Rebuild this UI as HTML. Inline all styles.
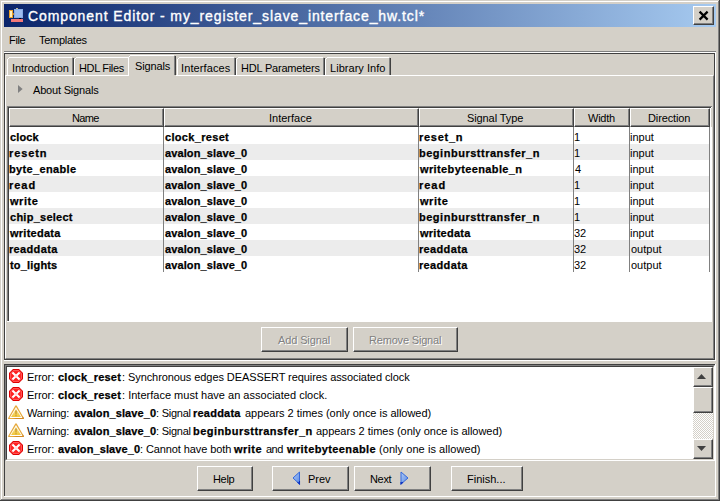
<!DOCTYPE html>
<html><head><meta charset="utf-8">
<style>
*{margin:0;padding:0;box-sizing:border-box}html,body{width:720px;height:501px;overflow:hidden;background:#D4D0C8}body{position:relative;font-family:"Liberation Sans",sans-serif;font-size:11px;color:#000}.a{position:absolute}.t{position:absolute;white-space:pre;line-height:13px}.b{font-weight:bold}.btn{position:absolute;background:#D4D0C8;border-top:1px solid #fff;border-left:1px solid #fff;border-right:1px solid #404040;border-bottom:1px solid #404040}.btn:after{content:"";position:absolute;left:0;top:0;right:0;bottom:0;border-right:1px solid #808080;border-bottom:1px solid #808080}
</style></head><body>
<div class="a" style="left:1px;top:1px;width:718px;height:1px;background:#fff"></div>
<div class="a" style="left:1px;top:1px;width:1px;height:498px;background:#fff"></div>
<div class="a" style="left:719px;top:0;width:1px;height:501px;background:#404040"></div>
<div class="a" style="left:718px;top:1px;width:1px;height:499px;background:#808080"></div>
<div class="a" style="left:0;top:500px;width:720px;height:1px;background:#404040"></div>
<div class="a" style="left:1px;top:499px;width:718px;height:1px;background:#808080"></div>
<div class="a" style="left:4px;top:4px;width:712px;height:23px;background:linear-gradient(to right,#0A246A,#A6CAF0)"></div>
<svg class="a" style="left:9px;top:8px" width="16" height="16" viewBox="0 0 16 16"><rect x="0" y="2" width="4" height="8" fill="#E9A02A"/><rect x="1" y="3" width="2" height="6" fill="#FFF0C0"/><rect x="4" y="5" width="1" height="2" fill="#C08030"/><rect x="7" y="0" width="2" height="1" fill="#C0B890"/><rect x="5" y="1" width="9" height="9" fill="#86ACE6"/><rect x="6" y="2" width="7" height="7" fill="#9DBDF0"/><rect x="10" y="10" width="2" height="1" fill="#000"/><rect x="2" y="11" width="12" height="3" fill="#F27878"/></svg>
<div class="btn" style="left:693px;top:6px;width:21px;height:19px"></div>
<svg class="a" style="left:698px;top:10px" width="12" height="12" viewBox="0 0 12 12"><path d="M1.6 1.6 L9.6 9.6 M9.6 1.6 L1.6 9.6" stroke="#000" stroke-width="2.2"/></svg>
<div class="a" style="left:4px;top:51px;width:712px;height:1px;background:#808080"></div>
<div class="a" style="left:4px;top:52px;width:712px;height:309px;border-top:1px solid #fff;border-right:1px solid #fff;border-bottom:1px solid #fff"></div>
<div class="a" style="left:4px;top:53px;width:711px;height:307px;border:1px solid #404040"></div>
<div class="a" style="left:7px;top:57px;width:67px;height:18px;background:#D4D0C8"></div>
<div class="a" style="left:9px;top:57px;width:63px;height:1px;background:#fff"></div>
<div class="a" style="left:8px;top:58px;width:1px;height:1px;background:#fff"></div>
<div class="a" style="left:7px;top:59px;width:1px;height:16px;background:#fff"></div>
<div class="a" style="left:72px;top:58px;width:1px;height:17px;background:#808080"></div>
<div class="a" style="left:73px;top:58px;width:1px;height:17px;background:#404040"></div>
<div class="a" style="left:74px;top:57px;width:56px;height:18px;background:#D4D0C8"></div>
<div class="a" style="left:76px;top:57px;width:52px;height:1px;background:#fff"></div>
<div class="a" style="left:75px;top:58px;width:1px;height:1px;background:#fff"></div>
<div class="a" style="left:74px;top:59px;width:1px;height:16px;background:#fff"></div>
<div class="a" style="left:128px;top:58px;width:1px;height:17px;background:#808080"></div>
<div class="a" style="left:129px;top:58px;width:1px;height:17px;background:#404040"></div>
<div class="a" style="left:177px;top:57px;width:59px;height:18px;background:#D4D0C8"></div>
<div class="a" style="left:179px;top:57px;width:55px;height:1px;background:#fff"></div>
<div class="a" style="left:178px;top:58px;width:1px;height:1px;background:#fff"></div>
<div class="a" style="left:177px;top:59px;width:1px;height:16px;background:#fff"></div>
<div class="a" style="left:234px;top:58px;width:1px;height:17px;background:#808080"></div>
<div class="a" style="left:235px;top:58px;width:1px;height:17px;background:#404040"></div>
<div class="a" style="left:236px;top:57px;width:89px;height:18px;background:#D4D0C8"></div>
<div class="a" style="left:238px;top:57px;width:85px;height:1px;background:#fff"></div>
<div class="a" style="left:237px;top:58px;width:1px;height:1px;background:#fff"></div>
<div class="a" style="left:236px;top:59px;width:1px;height:16px;background:#fff"></div>
<div class="a" style="left:323px;top:58px;width:1px;height:17px;background:#808080"></div>
<div class="a" style="left:324px;top:58px;width:1px;height:17px;background:#404040"></div>
<div class="a" style="left:325px;top:57px;width:66px;height:18px;background:#D4D0C8"></div>
<div class="a" style="left:327px;top:57px;width:62px;height:1px;background:#fff"></div>
<div class="a" style="left:326px;top:58px;width:1px;height:1px;background:#fff"></div>
<div class="a" style="left:325px;top:59px;width:1px;height:16px;background:#fff"></div>
<div class="a" style="left:389px;top:58px;width:1px;height:17px;background:#808080"></div>
<div class="a" style="left:390px;top:58px;width:1px;height:17px;background:#404040"></div>
<div class="a" style="left:5px;top:75px;width:709px;height:284px;border-top:1px solid #fff;border-left:1px solid #fff;border-right:1px solid #808080;border-bottom:1px solid #808080"></div>
<div class="a" style="left:128px;top:55px;width:48px;height:21px;background:#D4D0C8"></div>
<div class="a" style="left:130px;top:55px;width:44px;height:1px;background:#fff"></div>
<div class="a" style="left:129px;top:56px;width:1px;height:1px;background:#fff"></div>
<div class="a" style="left:128px;top:57px;width:1px;height:19px;background:#fff"></div>
<div class="a" style="left:174px;top:56px;width:1px;height:19px;background:#808080"></div>
<div class="a" style="left:175px;top:56px;width:1px;height:19px;background:#404040"></div>
<svg class="a" style="left:18px;top:85px" width="5" height="8" viewBox="0 0 5 8"><path d="M0 0 L4.6 4 L0 8 Z" fill="#808080"/></svg>
<div class="a" style="left:7px;top:106px;width:705px;height:216px;background:#fff"></div>
<div class="a" style="left:7px;top:106px;width:705px;height:1px;background:#808080"></div>
<div class="a" style="left:7px;top:106px;width:1px;height:215px;background:#808080"></div>
<div class="a" style="left:8px;top:107px;width:703px;height:1px;background:#404040"></div>
<div class="a" style="left:8px;top:107px;width:1px;height:214px;background:#404040"></div>
<div class="a" style="left:9px;top:108px;width:155px;height:19px;background:#D4D0C8;border-top:1px solid #fff;border-left:1px solid #fff;border-right:1px solid #404040;border-bottom:1px solid #404040"></div>
<div class="a" style="left:162px;top:109px;width:1px;height:17px;background:#808080"></div>
<div class="a" style="left:10px;top:125px;width:153px;height:1px;background:#808080"></div>
<div class="a" style="left:164px;top:108px;width:255px;height:19px;background:#D4D0C8;border-top:1px solid #fff;border-left:1px solid #fff;border-right:1px solid #404040;border-bottom:1px solid #404040"></div>
<div class="a" style="left:417px;top:109px;width:1px;height:17px;background:#808080"></div>
<div class="a" style="left:165px;top:125px;width:253px;height:1px;background:#808080"></div>
<div class="a" style="left:419px;top:108px;width:155px;height:19px;background:#D4D0C8;border-top:1px solid #fff;border-left:1px solid #fff;border-right:1px solid #404040;border-bottom:1px solid #404040"></div>
<div class="a" style="left:572px;top:109px;width:1px;height:17px;background:#808080"></div>
<div class="a" style="left:420px;top:125px;width:153px;height:1px;background:#808080"></div>
<div class="a" style="left:574px;top:108px;width:56px;height:19px;background:#D4D0C8;border-top:1px solid #fff;border-left:1px solid #fff;border-right:1px solid #404040;border-bottom:1px solid #404040"></div>
<div class="a" style="left:628px;top:109px;width:1px;height:17px;background:#808080"></div>
<div class="a" style="left:575px;top:125px;width:54px;height:1px;background:#808080"></div>
<div class="a" style="left:630px;top:108px;width:80px;height:19px;background:#D4D0C8;border-top:1px solid #fff;border-left:1px solid #fff;border-right:1px solid #404040;border-bottom:1px solid #404040"></div>
<div class="a" style="left:708px;top:109px;width:1px;height:17px;background:#808080"></div>
<div class="a" style="left:631px;top:125px;width:78px;height:1px;background:#808080"></div>
<div class="a" style="left:711px;top:108px;width:1px;height:19px;background:#D4D0C8"></div>
<div class="a" style="left:9px;top:144px;width:700px;height:16px;background:#ECECEC"></div>
<div class="a" style="left:9px;top:176px;width:700px;height:16px;background:#ECECEC"></div>
<div class="a" style="left:9px;top:208px;width:700px;height:16px;background:#ECECEC"></div>
<div class="a" style="left:9px;top:240px;width:700px;height:16px;background:#ECECEC"></div>
<div class="a" style="left:163px;top:127px;width:1px;height:145px;background:#808080"></div>
<div class="a" style="left:418px;top:127px;width:1px;height:145px;background:#808080"></div>
<div class="a" style="left:573px;top:127px;width:1px;height:145px;background:#808080"></div>
<div class="a" style="left:629px;top:127px;width:1px;height:145px;background:#808080"></div>
<div class="a" style="left:709px;top:127px;width:1px;height:145px;background:#808080"></div>
<div class="btn" style="left:261px;top:327px;width:87px;height:25px"></div>
<div class="btn" style="left:353px;top:327px;width:105px;height:25px"></div>
<div class="a" style="left:4px;top:364px;width:712px;height:133px;border-right:1px solid #fff;border-bottom:1px solid #fff"></div>
<div class="a" style="left:4px;top:364px;width:711px;height:132px;border-left:1px solid #404040;border-top:1px solid #404040"></div>
<div class="a" style="left:5px;top:365px;width:710px;height:96px;background:#fff;border-top:1px solid #808080;border-left:1px solid #808080;border-right:1px solid #fff;border-bottom:1px solid #fff"></div>
<div class="a" style="left:6px;top:366px;width:708px;height:94px;border-top:1px solid #404040;border-left:1px solid #404040;border-right:1px solid #D4D0C8;border-bottom:1px solid #D4D0C8"></div>
<svg class="a" style="left:9px;top:369px" width="14" height="14" viewBox="0 0 14 14"><path d="M4 0H10L14 4V10L10 14H4L0 10V4Z" fill="#E00000"/><path d="M4.5 1H9.5L13 4.5V9.5L9.5 13H4.5L1 9.5V4.5Z" fill="#FF2020"/><path d="M4.2 1.6H9.8L12.4 4.2V9.8L9.8 12.4H4.2L1.6 9.8V4.2Z" fill="none" stroke="#FF6A6A" stroke-width="0.8"/><path d="M3.4 3.4L10.6 10.6M10.6 3.4L3.4 10.6" stroke="#fff" stroke-width="2.1"/><rect x="6" y="6" width="2" height="2" fill="#FFE0E0"/></svg>
<svg class="a" style="left:9px;top:387px" width="14" height="14" viewBox="0 0 14 14"><path d="M4 0H10L14 4V10L10 14H4L0 10V4Z" fill="#E00000"/><path d="M4.5 1H9.5L13 4.5V9.5L9.5 13H4.5L1 9.5V4.5Z" fill="#FF2020"/><path d="M4.2 1.6H9.8L12.4 4.2V9.8L9.8 12.4H4.2L1.6 9.8V4.2Z" fill="none" stroke="#FF6A6A" stroke-width="0.8"/><path d="M3.4 3.4L10.6 10.6M10.6 3.4L3.4 10.6" stroke="#fff" stroke-width="2.1"/><rect x="6" y="6" width="2" height="2" fill="#FFE0E0"/></svg>
<svg class="a" style="left:8px;top:405px" width="16" height="14" viewBox="0 0 16 14"><defs><linearGradient id="wg" x1="0" y1="0" x2="0" y2="1"><stop offset="0" stop-color="#FAE79A"/><stop offset="1" stop-color="#F1C638"/></linearGradient></defs><path d="M8 0.2C8.4 0.2 8.6 0.4 8.8 0.8L15.8 13C16 13.5 15.8 14 15.2 14H0.8C0.2 14 0 13.5 0.2 13L7.2 0.8C7.4 0.4 7.6 0.2 8 0.2Z" fill="#E7A93C"/><path d="M15.8 13C16 13.5 15.8 14 15.2 14H4L15 11.6Z" fill="#D48A24"/><path d="M8 2.1L14.5 12.9H1.5Z" fill="#fff"/><path d="M8 3.7L13 12.1H3Z" fill="url(#wg)"/><path d="M7.3 5.4H8.7L8.5 9.4H7.5Z M7.4 10.2H8.6V11.3H7.4Z" fill="#BF8C22"/></svg>
<svg class="a" style="left:8px;top:423px" width="16" height="14" viewBox="0 0 16 14"><defs><linearGradient id="wg" x1="0" y1="0" x2="0" y2="1"><stop offset="0" stop-color="#FAE79A"/><stop offset="1" stop-color="#F1C638"/></linearGradient></defs><path d="M8 0.2C8.4 0.2 8.6 0.4 8.8 0.8L15.8 13C16 13.5 15.8 14 15.2 14H0.8C0.2 14 0 13.5 0.2 13L7.2 0.8C7.4 0.4 7.6 0.2 8 0.2Z" fill="#E7A93C"/><path d="M15.8 13C16 13.5 15.8 14 15.2 14H4L15 11.6Z" fill="#D48A24"/><path d="M8 2.1L14.5 12.9H1.5Z" fill="#fff"/><path d="M8 3.7L13 12.1H3Z" fill="url(#wg)"/><path d="M7.3 5.4H8.7L8.5 9.4H7.5Z M7.4 10.2H8.6V11.3H7.4Z" fill="#BF8C22"/></svg>
<svg class="a" style="left:9px;top:441px" width="14" height="14" viewBox="0 0 14 14"><path d="M4 0H10L14 4V10L10 14H4L0 10V4Z" fill="#E00000"/><path d="M4.5 1H9.5L13 4.5V9.5L9.5 13H4.5L1 9.5V4.5Z" fill="#FF2020"/><path d="M4.2 1.6H9.8L12.4 4.2V9.8L9.8 12.4H4.2L1.6 9.8V4.2Z" fill="none" stroke="#FF6A6A" stroke-width="0.8"/><path d="M3.4 3.4L10.6 10.6M10.6 3.4L3.4 10.6" stroke="#fff" stroke-width="2.1"/><rect x="6" y="6" width="2" height="2" fill="#FFE0E0"/></svg>
<div class="a" style="left:693px;top:367px;width:20px;height:92px;background:repeating-conic-gradient(#fff 0 25%,#D4D0C8 0 50%) 0 0/2px 2px"></div>
<div class="btn" style="left:693px;top:367px;width:20px;height:20px"></div>
<svg class="a" style="left:697px;top:374px" width="9" height="5" viewBox="0 0 9 5"><path d="M4.5 0L9 5H0Z" fill="#404040"/></svg>
<div class="btn" style="left:693px;top:387px;width:20px;height:26px"></div>
<div class="btn" style="left:693px;top:439px;width:20px;height:20px"></div>
<svg class="a" style="left:697px;top:446px" width="9" height="5" viewBox="0 0 9 5"><path d="M0 0H9L4.5 5Z" fill="#404040"/></svg>
<div class="btn" style="left:197px;top:466px;width:56px;height:25px"></div>
<div class="btn" style="left:272px;top:466px;width:77px;height:25px"></div>
<svg class="a" style="left:292px;top:471px" width="9" height="14" viewBox="0 0 9 14"><defs><linearGradient id="g1" x1="0" y1="0" x2="1" y2="1"><stop offset="0" stop-color="#B0CCF6"/><stop offset="1" stop-color="#5A88E4"/></linearGradient></defs><path d="M7.5 1 L1 7 L7.5 13 Z" fill="url(#g1)" stroke="#3468DC" stroke-width="1" stroke-linejoin="round"/><path d="M7.5 10 L7.5 13 L5.5 11.2" fill="none" stroke="#0A30C0" stroke-width="1.1"/></svg>
<div class="btn" style="left:354px;top:466px;width:77px;height:25px"></div>
<svg class="a" style="left:400px;top:471px" width="9" height="14" viewBox="0 0 9 14"><path d="M1 1 L8 7 L1 13 Z" fill="url(#g1)" stroke="#3468DC" stroke-width="1" stroke-linejoin="round"/><path d="M1 11 L1 13 L3 11.2" fill="none" stroke="#0A30C0" stroke-width="1.1"/></svg>
<div class="btn" style="left:451px;top:466px;width:72px;height:25px"></div>
<div class="t" style="left:28.00px;top:8px;font-size:14px;line-height:16px;-webkit-text-stroke:0.35px currentColor;color:#fff;letter-spacing:0.898px">Component Editor - my_register_slave_interface_hw.tcl*</div>
<div class="t" style="left:9.00px;top:34px;;letter-spacing:-0.333px">File</div>
<div class="t" style="left:39.00px;top:34px;;letter-spacing:-0.269px">Templates</div>
<div class="t" style="left:12.00px;top:62px;;letter-spacing:-0.055px">Introduction</div>
<div class="t" style="left:79.00px;top:62px;;letter-spacing:-0.325px">HDL Files</div>
<div class="t" style="left:135.00px;top:60px;;letter-spacing:-0.133px">Signals</div>
<div class="t" style="left:181.00px;top:62px;;letter-spacing:0.111px">Interfaces</div>
<div class="t" style="left:241.00px;top:62px;;letter-spacing:-0.192px">HDL Parameters</div>
<div class="t" style="left:330.00px;top:62px;;letter-spacing:0.036px">Library Info</div>
<div class="t" style="left:33.00px;top:84px;;letter-spacing:-0.183px">About Signals</div>
<div class="t" style="left:72.00px;top:112px;;letter-spacing:-0.667px">Name</div>
<div class="t" style="left:269.00px;top:112px;">Interface</div>
<div class="t" style="left:467.00px;top:112px;;letter-spacing:-0.100px">Signal Type</div>
<div class="t" style="left:588.00px;top:112px;;letter-spacing:-0.250px">Width</div>
<div class="t" style="left:648.00px;top:112px;;letter-spacing:-0.125px">Direction</div>
<div class="t" style="left:10.00px;top:131px;;font-weight:bold;-webkit-text-stroke:0.25px #000;letter-spacing:0.125px">clock</div>
<div class="t" style="left:165.00px;top:131px;;font-weight:bold;-webkit-text-stroke:0.25px #000;letter-spacing:0.320px">clock_reset</div>
<div class="t" style="left:419.00px;top:131px;;font-weight:bold;-webkit-text-stroke:0.25px #000;letter-spacing:0.733px">reset_n</div>
<div class="t" style="left:574.00px;top:131px;">1</div>
<div class="t" style="left:630.00px;top:131px;">input</div>
<div class="t" style="left:9.00px;top:147px;;font-weight:bold;-webkit-text-stroke:0.25px #000;letter-spacing:0.900px">resetn</div>
<div class="t" style="left:165.00px;top:147px;;font-weight:bold;-webkit-text-stroke:0.25px #000;letter-spacing:0.115px">avalon_slave_0</div>
<div class="t" style="left:419.00px;top:147px;;font-weight:bold;-webkit-text-stroke:0.25px #000;letter-spacing:0.516px">beginbursttransfer_n</div>
<div class="t" style="left:574.00px;top:147px;">1</div>
<div class="t" style="left:630.00px;top:147px;">input</div>
<div class="t" style="left:9.00px;top:163px;;font-weight:bold;-webkit-text-stroke:0.25px #000;letter-spacing:0.350px">byte_enable</div>
<div class="t" style="left:165.00px;top:163px;;font-weight:bold;-webkit-text-stroke:0.25px #000;letter-spacing:0.115px">avalon_slave_0</div>
<div class="t" style="left:420.00px;top:163px;;font-weight:bold;-webkit-text-stroke:0.25px #000;letter-spacing:0.381px">writebyteenable_n</div>
<div class="t" style="left:575.00px;top:163px;">4</div>
<div class="t" style="left:630.00px;top:163px;">input</div>
<div class="t" style="left:9.00px;top:179px;;font-weight:bold;-webkit-text-stroke:0.25px #000;letter-spacing:0.967px">read</div>
<div class="t" style="left:165.00px;top:179px;;font-weight:bold;-webkit-text-stroke:0.25px #000;letter-spacing:0.115px">avalon_slave_0</div>
<div class="t" style="left:419.00px;top:179px;;font-weight:bold;-webkit-text-stroke:0.25px #000;letter-spacing:0.967px">read</div>
<div class="t" style="left:574.00px;top:179px;">1</div>
<div class="t" style="left:630.00px;top:179px;">input</div>
<div class="t" style="left:10.00px;top:195px;;font-weight:bold;-webkit-text-stroke:0.25px #000;letter-spacing:0.525px">write</div>
<div class="t" style="left:165.00px;top:195px;;font-weight:bold;-webkit-text-stroke:0.25px #000;letter-spacing:0.115px">avalon_slave_0</div>
<div class="t" style="left:420.00px;top:195px;;font-weight:bold;-webkit-text-stroke:0.25px #000;letter-spacing:0.525px">write</div>
<div class="t" style="left:574.00px;top:195px;">1</div>
<div class="t" style="left:630.00px;top:195px;">input</div>
<div class="t" style="left:10.00px;top:211px;;font-weight:bold;-webkit-text-stroke:0.25px #000;letter-spacing:0.260px">chip_select</div>
<div class="t" style="left:165.00px;top:211px;;font-weight:bold;-webkit-text-stroke:0.25px #000;letter-spacing:0.115px">avalon_slave_0</div>
<div class="t" style="left:419.00px;top:211px;;font-weight:bold;-webkit-text-stroke:0.25px #000;letter-spacing:0.516px">beginbursttransfer_n</div>
<div class="t" style="left:574.00px;top:211px;">1</div>
<div class="t" style="left:630.00px;top:211px;">input</div>
<div class="t" style="left:10.00px;top:227px;;font-weight:bold;-webkit-text-stroke:0.25px #000;letter-spacing:0.250px">writedata</div>
<div class="t" style="left:165.00px;top:227px;;font-weight:bold;-webkit-text-stroke:0.25px #000;letter-spacing:0.115px">avalon_slave_0</div>
<div class="t" style="left:420.00px;top:227px;;font-weight:bold;-webkit-text-stroke:0.25px #000;letter-spacing:0.250px">writedata</div>
<div class="t" style="left:574.00px;top:227px;">32</div>
<div class="t" style="left:630.00px;top:227px;">input</div>
<div class="t" style="left:9.00px;top:243px;;font-weight:bold;-webkit-text-stroke:0.25px #000;letter-spacing:0.343px">readdata</div>
<div class="t" style="left:165.00px;top:243px;;font-weight:bold;-webkit-text-stroke:0.25px #000;letter-spacing:0.115px">avalon_slave_0</div>
<div class="t" style="left:419.00px;top:243px;;font-weight:bold;-webkit-text-stroke:0.25px #000;letter-spacing:0.343px">readdata</div>
<div class="t" style="left:574.00px;top:243px;">32</div>
<div class="t" style="left:631.00px;top:243px;">output</div>
<div class="t" style="left:10.00px;top:259px;;font-weight:bold;-webkit-text-stroke:0.25px #000;letter-spacing:0.175px">to_lights</div>
<div class="t" style="left:165.00px;top:259px;;font-weight:bold;-webkit-text-stroke:0.25px #000;letter-spacing:0.115px">avalon_slave_0</div>
<div class="t" style="left:419.00px;top:259px;;font-weight:bold;-webkit-text-stroke:0.25px #000;letter-spacing:0.343px">readdata</div>
<div class="t" style="left:574.00px;top:259px;">32</div>
<div class="t" style="left:631.00px;top:259px;">output</div>
<div class="t" style="left:278.00px;top:334px;color:#808080;text-shadow:1px 1px 0 #fff;letter-spacing:-0.122px">Add Signal</div>
<div class="t" style="left:369.00px;top:334px;color:#808080;text-shadow:1px 1px 0 #fff;letter-spacing:-0.183px">Remove Signal</div>
<div class="t" style="left:213.00px;top:473px;;letter-spacing:-0.333px">Help</div>
<div class="t" style="left:308.00px;top:473px;">Prev</div>
<div class="t" style="left:370.00px;top:473px;;letter-spacing:-0.333px">Next</div>
<div class="t" style="left:467.00px;top:473px;">Finish...</div>
<div class="t" style="left:27.00px;top:371px;;letter-spacing:-0.060px">Error:</div>
<div class="t" style="left:58.00px;top:371px;;font-weight:bold;-webkit-text-stroke:0.25px #000;letter-spacing:0.230px">clock_reset</div>
<div class="t" style="left:122.00px;top:371px;;letter-spacing:-0.079px">: Synchronous edges DEASSERT requires associated clock</div>
<div class="t" style="left:27.00px;top:389px;;letter-spacing:-0.060px">Error:</div>
<div class="t" style="left:58.00px;top:389px;;font-weight:bold;-webkit-text-stroke:0.25px #000;letter-spacing:0.230px">clock_reset</div>
<div class="t" style="left:122.00px;top:389px;;letter-spacing:0.012px">: Interface must have an associated clock.</div>
<div class="t" style="left:27.00px;top:407px;;letter-spacing:-0.179px">Warning:</div>
<div class="t" style="left:74.00px;top:407px;;font-weight:bold;-webkit-text-stroke:0.25px #000;letter-spacing:0.108px">avalon_slave_0</div>
<div class="t" style="left:156.00px;top:407px;;letter-spacing:-0.243px">: Signal</div>
<div class="t" style="left:193.00px;top:407px;;font-weight:bold;-webkit-text-stroke:0.25px #000;letter-spacing:0.229px">readdata</div>
<div class="t" style="left:245.00px;top:407px;;letter-spacing:-0.024px">appears 2 times (only once is allowed)</div>
<div class="t" style="left:27.00px;top:425px;;letter-spacing:-0.179px">Warning:</div>
<div class="t" style="left:74.00px;top:425px;;font-weight:bold;-webkit-text-stroke:0.25px #000;letter-spacing:0.108px">avalon_slave_0</div>
<div class="t" style="left:156.00px;top:425px;;letter-spacing:-0.243px">: Signal</div>
<div class="t" style="left:193.00px;top:425px;;font-weight:bold;-webkit-text-stroke:0.25px #000;letter-spacing:0.458px">beginbursttransfer_n</div>
<div class="t" style="left:316.00px;top:425px;;letter-spacing:-0.024px">appears 2 times (only once is allowed)</div>
<div class="t" style="left:27.00px;top:443px;;letter-spacing:-0.060px">Error:</div>
<div class="t" style="left:58.00px;top:443px;;font-weight:bold;-webkit-text-stroke:0.25px #000;letter-spacing:0.100px">avalon_slave_0</div>
<div class="t" style="left:140.00px;top:443px;;letter-spacing:-0.100px">: Cannot have both</div>
<div class="t" style="left:234.00px;top:443px;;font-weight:bold;-webkit-text-stroke:0.25px #000;letter-spacing:0.475px">write</div>
<div class="t" style="left:266.00px;top:443px;;letter-spacing:-0.500px">and</div>
<div class="t" style="left:287.00px;top:443px;;font-weight:bold;-webkit-text-stroke:0.25px #000;letter-spacing:0.393px">writebyteenable</div>
<div class="t" style="left:379.00px;top:443px;;letter-spacing:0.060px">(only one is allowed)</div>
</body></html>
